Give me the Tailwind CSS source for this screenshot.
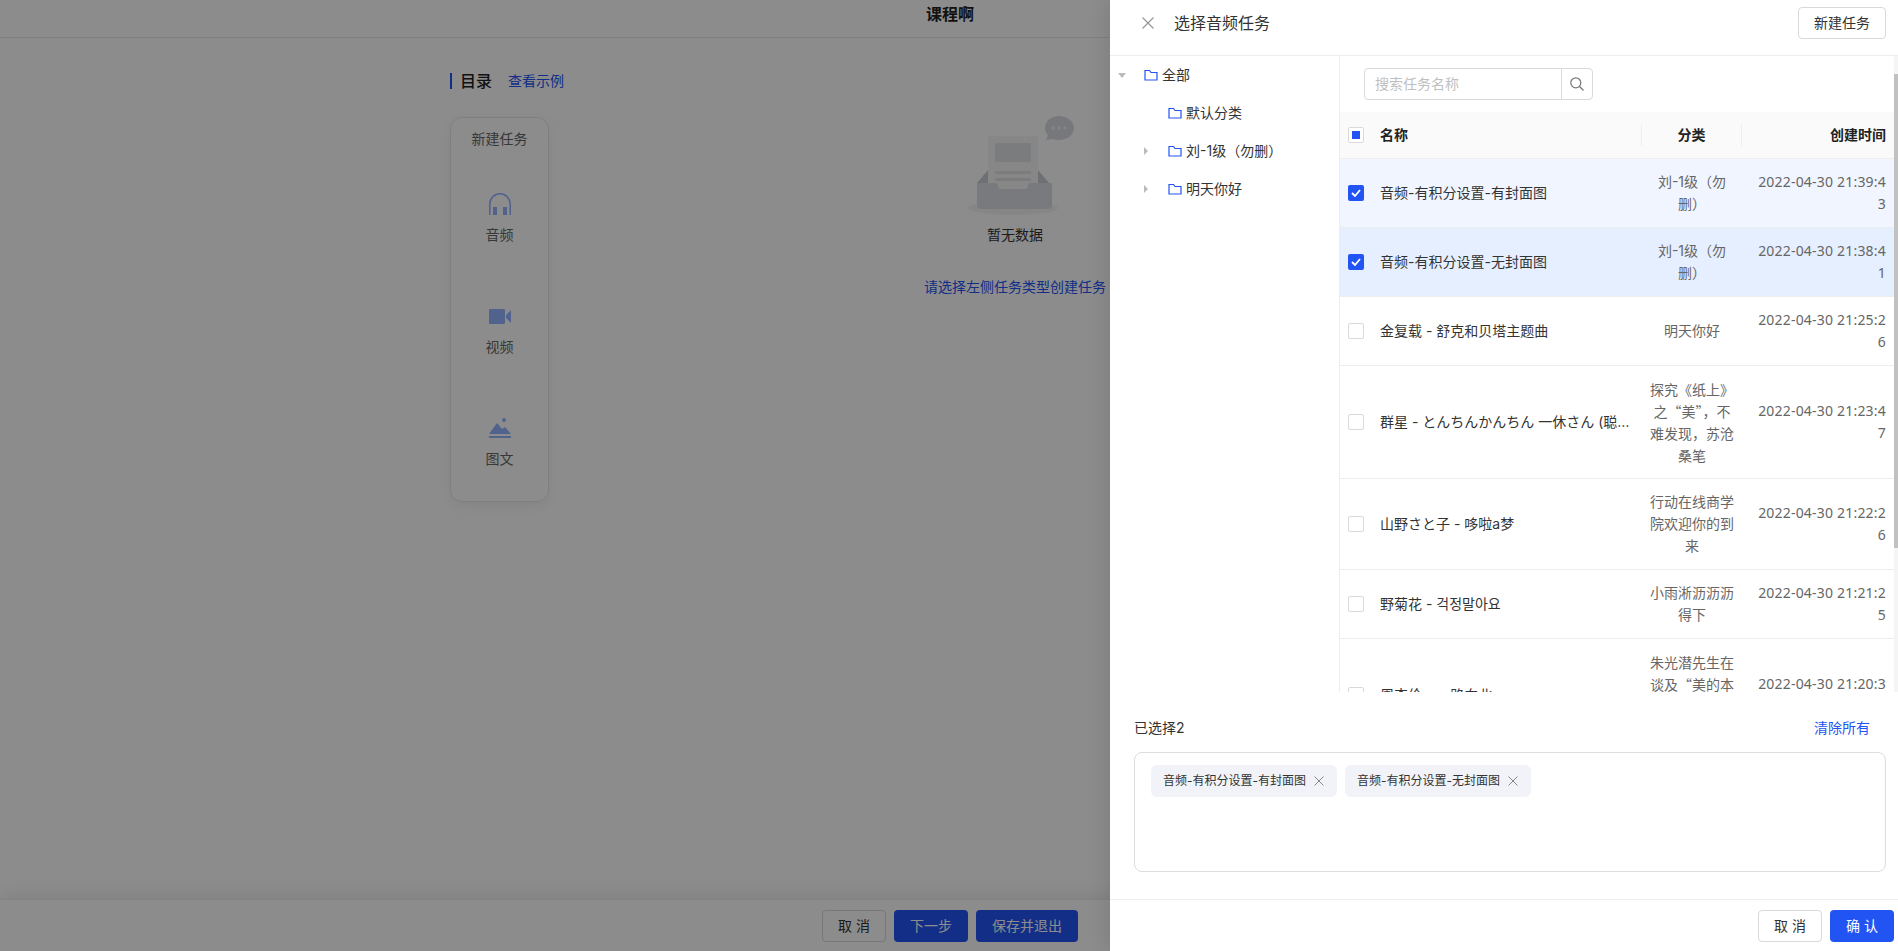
<!DOCTYPE html>
<html lang="zh">
<head>
<meta charset="utf-8">
<title>课程</title>
<script src="https://cdn.jsdelivr.net/npm/@tailwindcss/browser@4"></script>
</head>
<body class="bg-white font-['Inter','Noto_Sans_CJK_SC',sans-serif] text-sm text-[#333]">
<div class="relative h-[951px] w-[1898px] overflow-hidden">

  <!-- page behind the drawer -->
  <div class="flex h-full flex-col">
    <div class="h-[38px] border-b border-[#e8e8e8] pl-[926px] pt-[2px]">
      <span class="text-base font-bold leading-6 text-[#222]">课程啊</span>
    </div>
    <div class="flex flex-1 pl-[450px] pt-[35px]">
      <div class="w-[99px]">
        <div class="flex h-4 items-center whitespace-nowrap border-l-2 border-[#2254f4] pl-2">
          <span class="text-base font-medium text-[#222]">目录</span>
          <span class="ml-4 text-sm text-[#2254f4]">查看示例</span>
        </div>
        <div class="mt-7 flex h-[385px] w-[99px] flex-col items-center rounded-xl border border-[#e8e8e8] pt-[11px] shadow-[0_4px_12px_rgba(0,0,0,0.06)]">
          <div class="leading-5 text-[#666]">新建任务</div>
          <svg class="mt-[44px]" width="22" height="22" viewBox="0 0 22 22" fill="#94b4ff"><path d="M0 22V11a11 11 0 0 1 22 0v11h-1.600V11a9.400 9.400 0 0 0-18.800 0v11z"/><rect x="4" y="14" width="4" height="8"/><rect x="14" y="14" width="4" height="8"/></svg>
          <div class="mt-[10px] leading-5 text-[#666]">音频</div>
          <svg class="mt-[64px]" width="22" height="15" viewBox="0 0 22 15" fill="#94b4ff"><rect width="16" height="15" rx="1"/><path d="M17 6 22 1v13l-5-5z"/></svg>
          <div class="mt-[13px] leading-5 text-[#666]">视频</div>
          <svg class="mt-[61px]" width="22" height="21" viewBox="0 0 22 21" fill="#94b4ff"><circle cx="15" cy="2" r="2"/><path d="M0 16 8 5l5 6 3-2 6 7z"/><rect y="18" width="22" height="2"/></svg>
          <div class="mt-[10px] leading-5 text-[#666]">图文</div>
        </div>
      </div>
      <div class="ml-[375px] flex w-[182px] flex-col items-center">
        <svg class="ml-[12px] mt-[43px]" width="106" height="100" viewBox="0 0 106 100">
          <ellipse cx="45" cy="92" rx="45" ry="7" fill="#f4f4f4"/>
          <path d="M9 67 20 54v13zM70 54l11 13H70z" fill="#c8ccd2"/>
          <rect x="20" y="20" width="50" height="54" fill="#f6f6f6"/>
          <rect x="27" y="27" width="36" height="19" rx="1" fill="#e0e2e6"/>
          <rect x="27" y="55" width="36" height="3" rx="1.500" fill="#e0e2e6"/>
          <rect x="27" y="62" width="36" height="3" rx="1.500" fill="#e0e2e6"/>
          <path d="M9 67h18a3 3 0 0 1 3 3a3 3 0 0 0 3 3h24a3 3 0 0 0 3-3a3 3 0 0 1 3-3h21v22a4 4 0 0 1-4 4H13a4 4 0 0 1-4-4z" fill="#dcdfe4"/>
          <path d="M91 0c8 0 15 5 15 12s-7 12-15 12c-2 0-4 0-6-1l-7 1 2-5c-2-2-3-4-3-7 0-7 6-12 14-12z" fill="#d8dbe0"/>
          <circle cx="85" cy="12" r="1.800" fill="#f0f0f0"/><circle cx="91" cy="12" r="1.800" fill="#f0f0f0"/><circle cx="97" cy="12" r="1.800" fill="#f0f0f0"/>
        </svg>
        <div class="mt-[9px] leading-5 text-[#333]">暂无数据</div>
        <div class="mt-[32px] whitespace-nowrap leading-5 text-[#2254f4]">请选择左侧任务类型创建任务</div>
      </div>
    </div>
    <div class="flex h-[52px] items-center gap-2 border-t border-[#eee] pl-[822px] shadow-[0_-4px_16px_rgba(0,0,0,0.08)]">
      <button class="h-8 w-16 rounded border border-[#d9d9d9] text-[#333]">取 消</button>
      <button class="h-8 w-[74px] rounded bg-[#2254f4] text-white">下一步</button>
      <button class="h-8 w-[102px] rounded bg-[#2254f4] text-white">保存并退出</button>
    </div>
  </div>

  <!-- mask -->
  <div class="absolute inset-0 bg-black/45"></div>

  <!-- drawer -->
  <div class="absolute inset-y-0 right-0 flex w-[788px] flex-col bg-white shadow-[-6px_0_16px_rgba(0,0,0,0.08)]">
    <div class="flex h-[56px] shrink-0 items-center border-b border-[#eee] pb-[10px] pl-8 pr-3">
      <svg width="12" height="12" viewBox="0 0 12 12" stroke="#999" stroke-width="1.300" fill="none"><path d="M.5.5l11 11M11.500.5l-11 11"/></svg>
      <span class="ml-5 text-base leading-6 text-[#333]">选择音频任务</span>
      <button class="ml-auto h-8 w-[88px] rounded border border-[#d9d9d9] text-[#333]">新建任务</button>
    </div>

    <div class="flex h-[636px] shrink-0 overflow-hidden">
      <!-- tree -->
      <div class="w-[230px] shrink-0 border-r border-[#eee] leading-[38px] text-[#333]">
        <div class="flex h-[38px] items-center pl-2">
          <svg class="mr-[18px]" width="8" height="5" viewBox="0 0 8 5" fill="#bbb"><path d="M0 0h8L4 5z"/></svg>
          <svg width="14" height="12" viewBox="0 0 14 12" fill="none" stroke="#2254f4" stroke-width="1.200"><path d="M1 1.500h4.500l1.500 2h6V11H1z"/></svg>
          <span class="ml-1">全部</span>
        </div>
        <div class="flex h-[38px] items-center pl-[58px]">
          <svg width="14" height="12" viewBox="0 0 14 12" fill="none" stroke="#2254f4" stroke-width="1.200"><path d="M1 1.500h4.500l1.500 2h6V11H1z"/></svg>
          <span class="ml-1">默认分类</span>
        </div>
        <div class="flex h-[38px] items-center pl-[34px]">
          <svg class="mr-[20px]" width="4" height="8" viewBox="0 0 4 8" fill="#bbb"><path d="M0 0l4 4-4 4z"/></svg>
          <svg width="14" height="12" viewBox="0 0 14 12" fill="none" stroke="#2254f4" stroke-width="1.200"><path d="M1 1.500h4.500l1.500 2h6V11H1z"/></svg>
          <span class="ml-1">刘-1级（勿删）</span>
        </div>
        <div class="flex h-[38px] items-center pl-[34px]">
          <svg class="mr-[20px]" width="4" height="8" viewBox="0 0 4 8" fill="#bbb"><path d="M0 0l4 4-4 4z"/></svg>
          <svg width="14" height="12" viewBox="0 0 14 12" fill="none" stroke="#2254f4" stroke-width="1.200"><path d="M1 1.500h4.500l1.500 2h6V11H1z"/></svg>
          <span class="ml-1">明天你好</span>
        </div>
      </div>

      <!-- task list -->
      <div class="relative min-w-0 flex-1">
        <div class="flex h-[56px] items-start pl-6 pt-3">
          <div class="flex h-8 w-[229px] rounded border border-[#d9d9d9]">
            <div class="flex-1 pl-[10px] leading-[29px] text-[#bfbfbf]">搜索任务名称</div>
            <div class="flex w-[31px] items-center justify-center border-l border-[#d9d9d9]">
              <svg width="14" height="14" viewBox="0 0 14 14" fill="none" stroke="#777" stroke-width="1.200"><circle cx="5.800" cy="5.800" r="5"/><path d="M9.500 9.500 13.500 13.500"/></svg>
            </div>
          </div>
        </div>
        <table class="w-[554px] table-fixed border-collapse text-[#333]">
          <colgroup><col class="w-[40px]"><col class="w-[262px]"><col class="w-[100px]"><col class="w-[152px]"></colgroup>
          <thead>
            <tr class="h-[46px] bg-[#fafafa] font-bold text-[#222]">
              <th class="border-b border-[#eee] pl-2 text-left">
                <span class="flex h-4 w-4 items-center justify-center rounded-[2px] border border-[#d9d9d9] bg-white"><span class="h-2 w-2 bg-[#2254f4]"></span></span>
              </th>
              <th class="border-b border-[#eee] text-left"><span class="block border-r border-[#eee] leading-[22px]">名称</span></th>
              <th class="border-b border-[#eee] text-center"><span class="block border-r border-[#eee] leading-[22px]">分类</span></th>
              <th class="border-b border-[#eee] pr-2 text-right">创建时间</th>
            </tr>
          </thead>
          <tbody class="leading-[22px]">
            <tr class="border-b border-[#eee] bg-[#f0f5ff]">
              <td class="pl-2"><span class="flex h-4 w-4 items-center justify-center rounded-[2px] bg-[#2254f4]"><svg width="10" height="8" viewBox="0 0 10 8" fill="none" stroke="#fff" stroke-width="1.800"><path d="M1 4l3 3 5-6"/></svg></span></td>
              <td class="truncate pr-3">音频-有积分设置-有封面图</td>
              <td class="break-all px-2 py-3 text-center text-[#666]">刘-1级（勿删）</td>
              <td class="break-all py-3 pl-3 pr-2 text-right font-['Noto_Sans',sans-serif] tracking-[0.2px] text-[#666]">2022-04-30 21:39:43</td>
            </tr>
            <tr class="border-b border-[#eee] bg-[#e6efff]">
              <td class="pl-2"><span class="flex h-4 w-4 items-center justify-center rounded-[2px] bg-[#2254f4]"><svg width="10" height="8" viewBox="0 0 10 8" fill="none" stroke="#fff" stroke-width="1.800"><path d="M1 4l3 3 5-6"/></svg></span></td>
              <td class="truncate pr-3">音频-有积分设置-无封面图</td>
              <td class="break-all px-2 py-3 text-center text-[#666]">刘-1级（勿删）</td>
              <td class="break-all py-3 pl-3 pr-2 text-right font-['Noto_Sans',sans-serif] tracking-[0.2px] text-[#666]">2022-04-30 21:38:41</td>
            </tr>
            <tr class="border-b border-[#eee]">
              <td class="pl-2"><span class="block h-4 w-4 rounded-[2px] border border-[#d9d9d9]"></span></td>
              <td class="truncate pr-3">金复载 - 舒克和贝塔主题曲</td>
              <td class="break-all px-2 py-3 text-center text-[#666]">明天你好</td>
              <td class="break-all py-3 pl-3 pr-2 text-right font-['Noto_Sans',sans-serif] tracking-[0.2px] text-[#666]">2022-04-30 21:25:26</td>
            </tr>
            <tr class="border-b border-[#eee]">
              <td class="pl-2"><span class="block h-4 w-4 rounded-[2px] border border-[#d9d9d9]"></span></td>
              <td class="truncate pr-3">群星 - とんちんかんちん 一休さん (聪明的一休)</td>
              <td class="break-all px-2 py-3 text-center font-['Noto_Sans_CJK_SC',sans-serif] text-[#666]">探究《纸上》之“美”，不难发现，苏沧桑笔</td>
              <td class="break-all py-3 pl-3 pr-2 text-right font-['Noto_Sans',sans-serif] tracking-[0.2px] text-[#666]">2022-04-30 21:23:47</td>
            </tr>
            <tr class="border-b border-[#eee]">
              <td class="pl-2"><span class="block h-4 w-4 rounded-[2px] border border-[#d9d9d9]"></span></td>
              <td class="truncate pr-3">山野さと子 - 哆啦a梦</td>
              <td class="break-all px-2 py-3 text-center text-[#666]">行动在线商学院欢迎你的到来</td>
              <td class="break-all py-3 pl-3 pr-2 text-right font-['Noto_Sans',sans-serif] tracking-[0.2px] text-[#666]">2022-04-30 21:22:26</td>
            </tr>
            <tr class="border-b border-[#eee]">
              <td class="pl-2"><span class="block h-4 w-4 rounded-[2px] border border-[#d9d9d9]"></span></td>
              <td class="truncate pr-3">野菊花 - 걱정말아요</td>
              <td class="break-all px-2 py-3 text-center text-[#666]">小雨淅沥沥沥得下</td>
              <td class="break-all py-3 pl-3 pr-2 text-right font-['Noto_Sans',sans-serif] tracking-[0.2px] text-[#666]">2022-04-30 21:21:25</td>
            </tr>
            <tr class="border-b border-[#eee]">
              <td class="pl-2"><span class="block h-4 w-4 rounded-[2px] border border-[#d9d9d9]"></span></td>
              <td class="truncate pr-3">周杰伦 - 一路向北</td>
              <td class="break-all px-2 py-3 text-center font-['Noto_Sans_CJK_SC',sans-serif] text-[#666]">朱光潜先生在谈及“美的本质”时说过这样一段</td>
              <td class="break-all py-3 pl-3 pr-2 text-right font-['Noto_Sans',sans-serif] tracking-[0.2px] text-[#666]">2022-04-30 21:20:35</td>
            </tr>
          </tbody>
        </table>
        <!-- scrollbar -->
        <div class="absolute inset-y-0 right-0 w-1 bg-[#f5f5f5]">
          <div class="mt-[18px] h-[474px] bg-[#c1c1c1]"></div>
        </div>
      </div>
    </div>

    <!-- selected -->
    <div class="flex-1 pl-6">
      <div class="flex h-[60px] w-[736px] items-center justify-between pt-[12px]">
        <span class="text-[#333]">已选择2</span>
        <span class="text-[#2254f4]">清除所有</span>
      </div>
      <div class="flex h-[120px] w-[752px] items-start gap-2 rounded-lg border border-[#ddd] px-4 pt-3">
        <div class="flex h-8 items-center rounded-md bg-[#f2f3f8] pl-3 pr-[13px] text-xs text-[#333]">音频-有积分设置-有封面图
          <svg class="ml-2" width="10" height="10" viewBox="0 0 10 10" stroke="#888" fill="none"><path d="M.5.5l9 9M9.500.5l-9 9"/></svg>
        </div>
        <div class="flex h-8 items-center rounded-md bg-[#f2f3f8] pl-3 pr-[13px] text-xs text-[#333]">音频-有积分设置-无封面图
          <svg class="ml-2" width="10" height="10" viewBox="0 0 10 10" stroke="#888" fill="none"><path d="M.5.5l9 9M9.500.5l-9 9"/></svg>
        </div>
      </div>
    </div>

    <!-- footer -->
    <div class="flex h-[52px] shrink-0 items-center justify-end gap-2 border-t border-[#eee] pr-1">
      <button class="h-8 w-16 rounded border border-[#d9d9d9] text-[#333]">取 消</button>
      <button class="h-8 w-16 rounded bg-[#2254f4] text-white">确 认</button>
    </div>
  </div>
</div>
</body>
</html>
